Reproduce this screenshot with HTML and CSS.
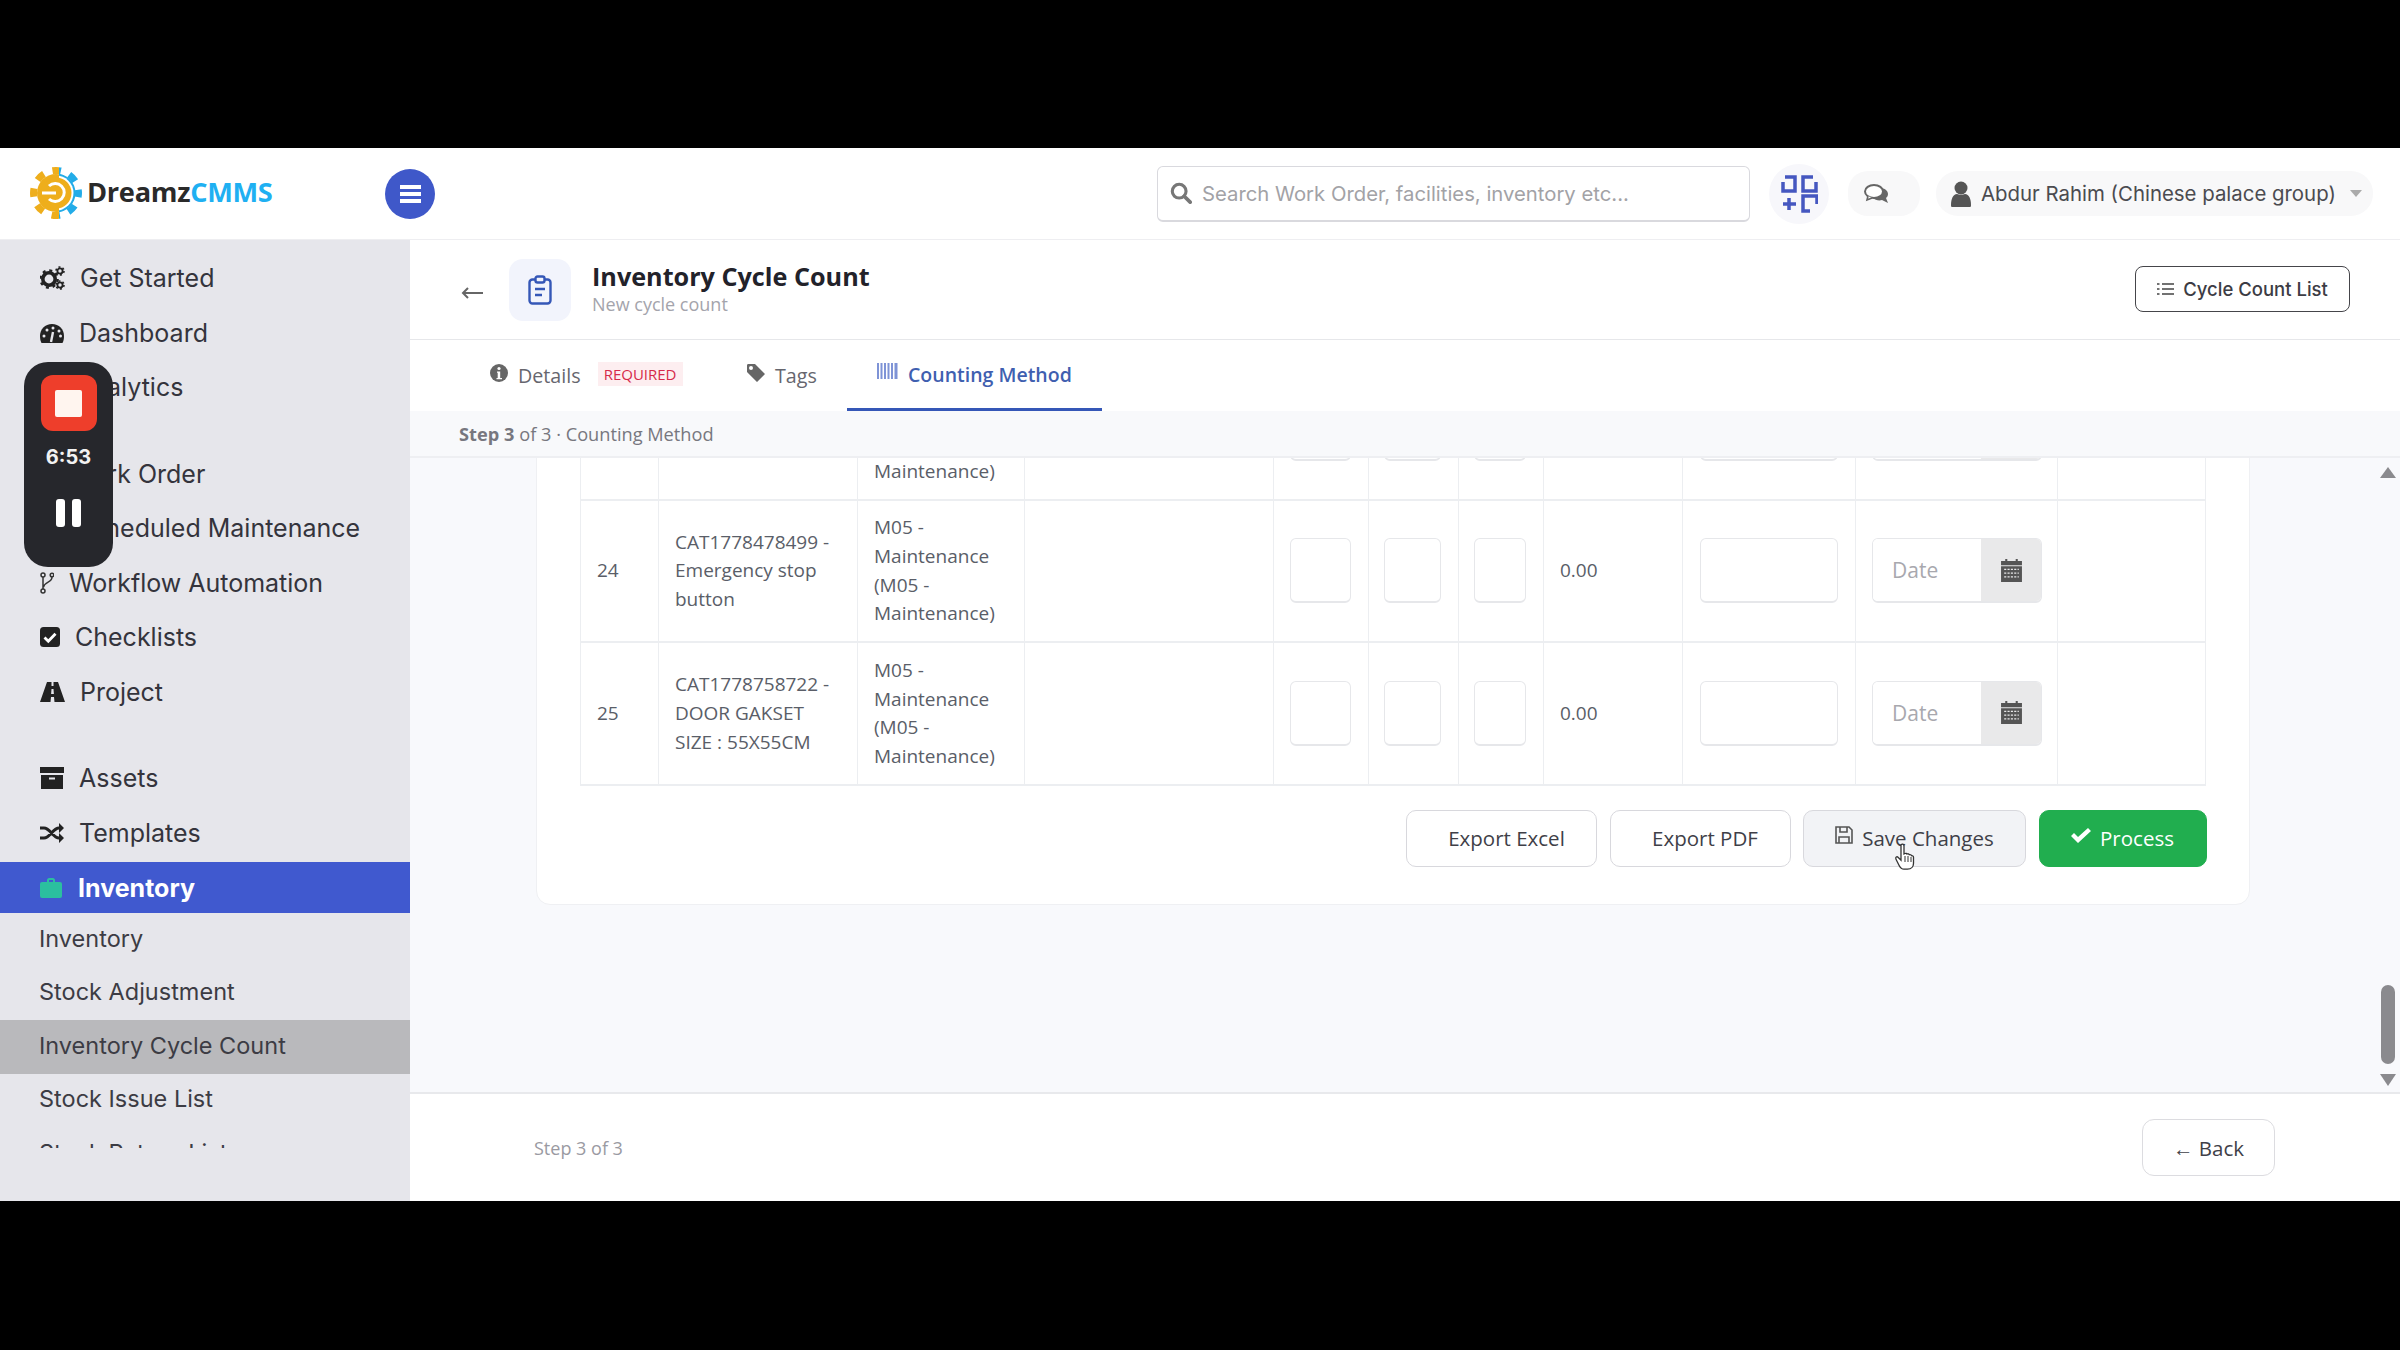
FILE: index.html
```html
<!DOCTYPE html>
<html lang="en">
<head>
  <meta charset="UTF-8">
  <title>Inventory Cycle Count - DreamzCMMS</title>
  <link rel="stylesheet" href="styles.css">
</head>
<body>
<div class="app">

  <!-- Top bar -->
  <header class="topbar">
    <div class="brand">
      <svg class="brand-logo" viewBox="0 0 52 52">
        <defs>
          <clipPath id="logo-left"><rect x="0" y="0" width="29" height="52"/></clipPath>
          <clipPath id="logo-right"><rect x="29" y="0" width="23" height="52"/></clipPath>
        </defs>
        <g clip-path="url(#logo-left)">
          <circle cx="26" cy="26" r="19" fill="#eeae1c"/>
          <circle cx="26" cy="26" r="22.5" fill="none" stroke="#eeae1c" stroke-width="7" stroke-dasharray="8.6 9.07" stroke-dashoffset="4.3"/>
        </g>
        <g clip-path="url(#logo-right)">
          <circle cx="26" cy="26" r="19.5" fill="#23ace8"/>
          <circle cx="26" cy="26" r="22.5" fill="none" stroke="#23ace8" stroke-width="7" stroke-dasharray="8.6 9.07" stroke-dashoffset="4.3"/>
          <circle cx="26" cy="26" r="17.5" fill="#fff"/>
        </g>
        <circle cx="26" cy="26" r="15.5" fill="#eeae1c"/>
        <path d="M19 19A9 9 0 1 1 19 32M12 26H26" fill="none" stroke="#fff" stroke-width="3"/>
      </svg>
      <span class="brand-name">Dreamz<span class="brand-accent">CMMS</span></span>
    </div>
    <button class="menu-toggle"><span></span><span></span><span></span></button>

    <div class="search-box">
      <svg class="search-icon" viewBox="0 0 24 24"><circle cx="10" cy="10" r="7.5" fill="none" stroke="#777" stroke-width="3.4"/><path d="M15.5 15.5L22 22" stroke="#777" stroke-width="4" stroke-linecap="round"/></svg>
      <input type="text" placeholder="Search Work Order, facilities, inventory etc...">
    </div>

    <div class="scan-btn">
      <svg viewBox="0 0 38 38" fill="none" stroke="#4557c0" stroke-width="3.5">
        <path d="M5 2H15V16H3V7"/>
        <path d="M33 2H23V16H36V7"/>
        <path d="M3 29H16M9 23V35"/>
        <path d="M30 36H23V21H37V29"/>
      </svg>
    </div>
    <div class="chat-btn">
      <svg viewBox="0 0 25 19">
        <path d="M12 4c7-1 12 2 12 6 0 2-1 3-2 4l2 5-6-3c-3 1-7 0-9-2z" fill="#666"/>
        <ellipse cx="10" cy="7.5" rx="9" ry="6.5" fill="#fff" stroke="#666" stroke-width="2"/>
        <path d="M4 12l-1 4 5-2" fill="#fff" stroke="#666" stroke-width="1.6"/>
      </svg>
    </div>
    <div class="user-pill">
      <svg class="user-icon" viewBox="0 0 20 26"><circle cx="10" cy="7" r="6.5" fill="#555"/><path d="M1 26c-1 0-1-1-1-2 0-6 2-11 6-11 2 1 6 1 8 0 4 0 6 5 6 11 0 1 0 2-1 2z" fill="#555"/></svg>
      <span class="user-name">Abdur Rahim (Chinese palace group)</span>
      <span class="user-caret"></span>
    </div>
  </header>

  <div class="app-body">

    <!-- Sidebar -->
    <aside class="sidebar">
      <nav class="nav-list">
        <a class="nav-item" href="#">
          <svg class="ico ico-cogs" viewBox="0 0 25 24"><circle cx="9" cy="13" r="6.2" fill="none" stroke="#222" stroke-width="3.6"/><circle cx="9" cy="13" r="8.6" fill="none" stroke="#222" stroke-width="2.4" stroke-dasharray="3 3.75"/><circle cx="20" cy="5" r="2.6" fill="none" stroke="#222" stroke-width="1.8"/><circle cx="20" cy="5" r="4" fill="none" stroke="#222" stroke-width="1.6" stroke-dasharray="2 2.2"/><circle cx="20" cy="19" r="2.6" fill="none" stroke="#222" stroke-width="1.8"/><circle cx="20" cy="19" r="4" fill="none" stroke="#222" stroke-width="1.6" stroke-dasharray="2 2.2"/></svg>
          Get Started
        </a>
        <a class="nav-item" href="#">
          <svg class="ico ico-dash" viewBox="0 0 24 20"><path d="M1.5 20C.5 18 0 16 0 13 0 6 5 1 12 1s12 5 12 12c0 3-.5 5-1.5 7z" fill="#222"/><path d="M11 19l2-10" stroke="#e6e6eb" stroke-width="2.4"/><g fill="#e6e6eb"><circle cx="4" cy="13" r="1.5"/><circle cx="7" cy="7" r="1.5"/><circle cx="13" cy="5" r="1.5"/><circle cx="19" cy="8" r="1.5"/><circle cx="20.5" cy="13" r="1.5"/></g></svg>
          Dashboard
        </a>
        <a class="nav-item" href="#">
          <svg class="ico ico-analytics" viewBox="0 0 20 20"><path d="M1 20V10h4v10zM8 20V4h4v16zM15 20V0h4v20z" fill="#222"/></svg>
          Analytics
        </a>
        <a class="nav-item nav-gap" href="#">
          <svg class="ico ico-order" viewBox="0 0 14 20"><path d="M0 0h14v20H0z" fill="#222"/></svg>
          Work Order
        </a>
        <a class="nav-item" href="#">
          <svg class="ico ico-analytics" viewBox="0 0 20 20"><path d="M0 2h20v18H0z" fill="#222"/></svg>
          Scheduled Maintenance
        </a>
        <a class="nav-item" href="#">
          <svg class="ico ico-flow" viewBox="0 0 14 22" fill="none" stroke="#333" stroke-width="1.5"><circle cx="3" cy="3" r="2"/><circle cx="12" cy="3" r="1.8"/><circle cx="3" cy="19" r="2"/><path d="M3 5v12M12 5c0 6-7 4-8.500 10"/></svg>
          Workflow Automation
        </a>
        <a class="nav-item" href="#">
          <svg class="ico ico-check" viewBox="0 0 20 20"><rect width="20" height="20" rx="3.5" fill="#222"/><path d="M4.500 10.500l3.800 3.800 7.200-7.600" fill="none" stroke="#fff" stroke-width="2.8"/></svg>
          Checklists
        </a>
        <a class="nav-item" href="#">
          <svg class="ico ico-road" viewBox="0 0 25 20"><path d="M7 0h4.500v4h2V0H18l7 20H14.500l-.5-5h-3l-.5 5H0zM11.500 7l-.4 5h2.800l-.4-5z" fill="#222"/></svg>
          Project
        </a>
        <a class="nav-item nav-gap" href="#">
          <svg class="ico ico-box" viewBox="0 0 24 22"><path d="M0 0h24v6H0zM1 8h22v14H1z" fill="#222"/><path d="M9 11.500h6" stroke="#e6e6eb" stroke-width="2"/></svg>
          Assets
        </a>
        <a class="nav-item" href="#">
          <svg class="ico ico-box" viewBox="0 0 24 20"><path d="M0 5h4c6 0 9 10 15 10h1M0 15h4c6 0 9-10 15-10h1" fill="none" stroke="#222" stroke-width="3"/><path d="M19 0l5 5-5 5zM19 10l5 5-5 5z" fill="#222"/></svg>
          Templates
        </a>
        <a class="nav-item nav-active" href="#">
          <svg class="ico ico-case" viewBox="0 0 22 20"><path d="M7 4V2c0-1 1-2 2-2h4c1 0 2 1 2 2v2h-2V2H9v2z" fill="#2bbf9f"/><rect y="4" width="22" height="16" rx="2" fill="#2bbf9f"/></svg>
          Inventory
        </a>
        <a class="nav-sub" href="#">Inventory</a>
        <a class="nav-sub" href="#">Stock Adjustment</a>
        <a class="nav-sub nav-current" href="#">Inventory Cycle Count</a>
        <a class="nav-sub" href="#">Stock Issue List</a>
        <a class="nav-sub" href="#">Stock Return List</a>
      </nav>
    </aside>

    <!-- Main -->
    <main class="main">
      <div class="page-head">
        <span class="back-arrow">
          <svg viewBox="0 0 22 12" fill="none" stroke="#666" stroke-width="2"><path d="M22 6H2M7 1L2 6l5 5"/></svg>
        </span>
        <div class="page-tile">
          <svg viewBox="0 0 24 30" fill="none" stroke="#3557b7" stroke-width="2.4"><rect x="1.5" y="4.5" width="21" height="24" rx="3"/><rect x="7.5" y="1.5" width="9" height="6" rx="2" fill="#f2f4fc"/><path d="M7 14h10M7 20h7"/></svg>
        </div>
        <div class="page-titles">
          <h1>Inventory Cycle Count</h1>
          <p>New cycle count</p>
        </div>
        <a class="list-btn" href="#">
          <svg viewBox="0 0 17 14" fill="none" stroke="#444" stroke-width="1.6"><path d="M5 2h12M5 7h12M5 12h12M0 2h2.500M0 7h2.500M0 12h2.500"/></svg>
          Cycle Count List
        </a>
      </div>

      <div class="tabs">
        <a class="tab tab-details" href="#">
          <svg class="tab-icon" viewBox="0 0 18 18"><circle cx="9" cy="9" r="9" fill="#666"/><path d="M7 7.500h3.200V14H12v1.200H6.500V14h1.200V8.700H7z" fill="#fff"/><circle cx="9" cy="4.500" r="1.600" fill="#fff"/></svg>
          Details
          <span class="badge">REQUIRED</span>
        </a>
        <a class="tab tab-tags" href="#">
          <svg class="tab-icon" viewBox="0 0 18 18"><path d="M0 1.500C0 .5.500 0 1.500 0H8l10 10-8 8L0 8zM4 6a2 2 0 1 0 0-4 2 2 0 0 0 0 4z" fill="#666"/></svg>
          Tags
        </a>
        <a class="tab tab-current" href="#">
          <svg class="tab-icon tab-icon-wide" viewBox="0 0 21 16"><path d="M0 0h2v16H0zM3.500 0h2v16h-2zM7 0h2v16H7zM10.500 0h2v16h-2zM14 0h2v16h-2zM17.500 0h3v16h-3z" fill="#7e93d6"/></svg>
          Counting Method
        </a>
      </div>

      <div class="step-bar"><strong>Step 3</strong> of 3 &middot; Counting Method</div>

      <div class="scroll-area">
        <div class="card">
          <table class="count-table">
            <colgroup>
              <col class="c-no"><col class="c-item"><col class="c-cat"><col class="c-note">
              <col class="c-a"><col class="c-b"><col class="c-c"><col class="c-total">
              <col class="c-amount"><col class="c-date"><col class="c-end">
            </colgroup>
            <tbody id="rows"></tbody>
          </table>

          <div class="actions">
            <button class="btn btn-excel">Export Excel</button>
            <button class="btn btn-pdf">Export PDF</button>
            <button class="btn btn-save">
              <svg viewBox="0 0 18 18" fill="none" stroke="#555" stroke-width="1.6"><path d="M1 1h13l3 3v13H1z"/><path d="M5 1v5h7V1M4 17v-6h10v6"/></svg>
              Save Changes
            </button>
            <button class="btn btn-process">
              <svg viewBox="0 0 20 15"><path d="M0 8l3-3 4 4 10-9 3 3L7 15z" fill="#fff"/></svg>
              Process
            </button>
          </div>
        </div>

        <!-- custom scrollbar -->
        <span class="scroll-up"></span>
        <span class="scroll-thumb"></span>
        <span class="scroll-down"></span>
      </div>

      <div class="page-foot">
        <span class="foot-step">Step 3 of 3</span>
        <a class="back-btn" href="#">&larr; Back</a>
      </div>
    </main>
  </div>

  <!-- Screen recorder widget -->
  <div class="recorder">
    <div class="rec-stop"><span></span></div>
    <div class="rec-time">6:53</div>
    <div class="rec-pause"><span></span><span></span></div>
  </div>

  <!-- Mouse pointer -->
  <svg class="pointer" viewBox="0 0 20 28"><path d="M6 2c1-1.500 3-1 3 1v8l1-.5c1-.5 2 0 2 .5 1-.5 2 0 2.300.7 1-.4 2 .2 2.200 1 1-.2 2 .5 2 1.500v6c0 3-2 6-6 6H9c-3 0-4-2-5-4l-3-6c-1-2 1-3 2-2l3 3z" fill="#fff" stroke="#333" stroke-width="1.300"/><path d="M10 13v6M13 13v6M16 14v5" stroke="#333" stroke-width="1"/></svg>
</div>

<script>
  // rows of the list, the first one is scrolled mostly out of view
  const cat = 'M05 -<br>Maintenance<br>(M05 -<br>Maintenance)';
  const items = [
    { no: '', name: '' },
    { no: 24, name: 'CAT1778478499 -<br>Emergency stop<br>button' },
    { no: 25, name: 'CAT1778758722 -<br>DOOR GAKSET<br>SIZE : 55X55CM' }
  ];
  const calendar = '<svg viewBox="0 0 20 22"><path d="M4 0h2v3H4zM14 0h2v3h-2zM0 2h20v4H0z" fill="#555"/><path d="M0 7h20v15H0z" fill="#555"/><path d="M3 10h14M3 13.500h14M3 17h14" stroke="#e9e9ea" stroke-width="1.200" stroke-dasharray="2 1.200"/></svg>';

  document.getElementById('rows').innerHTML = items.map(item => `
    <tr>
      <td class="cell-no">${item.no}</td>
      <td>${item.name}</td>
      <td>${cat}</td>
      <td></td>
      <td class="cell-input"><input class="qty qty-a" type="text"></td>
      <td class="cell-input"><input class="qty qty-b" type="text"></td>
      <td class="cell-input"><input class="qty qty-c" type="text"></td>
      <td class="cell-total">0.00</td>
      <td class="cell-input"><input class="qty qty-d" type="text"></td>
      <td class="cell-input">
        <div class="date-group"><input type="text" placeholder="Date"><span class="date-addon">${calendar}</span></div>
      </td>
      <td></td>
    </tr>`).join('');
</script>
</body>
</html>
```

FILE: styles.css
```css
/* General */
* {
  box-sizing: border-box;
}

html, body {
  margin: 0;
  height: 1350px;
  overflow: hidden;
  background-color: #000;
}

body {
  padding-top: 148px;
  font-family: Inter, "Liberation Sans", sans-serif;
  color: #333;
}

a {
  text-decoration: none;
  color: inherit;
}

.app {
  position: relative;
  height: 1053px;
  display: flex;
  flex-direction: column;
  background-color: #fff;
}

/* Top bar */
.topbar {
  height: 92px;
  display: flex;
  align-items: center;
  background-color: #fff;
  border-bottom: 1px solid #eeeef1;
}

.brand {
  width: 385px;
  padding-left: 30px;
  display: flex;
  align-items: center;
  gap: 5px;
}

.brand-logo {
  width: 52px;
  height: 52px;
  margin-top: -2px;
}

.brand-name {
  margin-top: -4px;
  font-family: "Open Sans", sans-serif;
  font-size: 27.2px;
  font-weight: 700;
  color: #2a2a2a;
  letter-spacing: -0.3px;
}

.brand-accent {
  color: #1fb0f2;
}

.menu-toggle {
  width: 50px;
  height: 50px;
  border: none;
  border-radius: 50%;
  background-color: #3f58c9;
  display: flex;
  flex-direction: column;
  justify-content: center;
  align-items: center;
  gap: 3px;
  padding: 0;
}

.menu-toggle span {
  width: 21px;
  height: 4px;
  background-color: #fff;
}

.search-box {
  margin-left: 722px;
  width: 593px;
  height: 56px;
  display: flex;
  align-items: center;
  gap: 10px;
  padding-left: 12px;
  border: 1px solid #d9d9de;
  border-bottom-width: 2px;
  border-radius: 6px;
}

.search-icon {
  width: 22px;
  height: 22px;
  flex: none;
}

.search-box input {
  flex: 1;
  border: none;
  outline: none;
  padding: 0;
  font-family: Inter, sans-serif;
  font-size: 20.3px;
}

.search-box input::placeholder {
  color: #a2a2a6;
}

.scan-btn {
  margin-left: 19px;
  width: 60px;
  height: 60px;
  display: flex;
  align-items: center;
  justify-content: center;
  background-color: #f7f7fb;
  border-radius: 50%;
}

.scan-btn svg {
  width: 38px;
  height: 38px;
}

.chat-btn {
  margin-left: 19px;
  width: 72px;
  height: 45px;
  display: flex;
  align-items: center;
  justify-content: center;
  padding-right: 16px;
  background-color: #f8f8f9;
  border-radius: 20px;
}

.chat-btn svg {
  width: 25px;
  height: 19px;
}

.user-pill {
  margin-left: 16px;
  width: 437px;
  height: 45px;
  display: flex;
  align-items: center;
  padding-left: 15px;
  background-color: #f8f8f9;
  border-radius: 22px;
}

.user-icon {
  width: 20px;
  height: 26px;
  flex: none;
}

.user-name {
  margin-left: 10px;
  font-size: 20.4px;
  color: #4b4b50;
  white-space: nowrap;
}

.user-caret {
  margin-left: 14px;
  border-left: 6px solid transparent;
  border-right: 6px solid transparent;
  border-top: 7px solid #aaa;
}

.app-body {
  flex: 1;
  min-height: 0;
  display: grid;
  grid-template-columns: 410px 1fr;
}

/* Sidebar */
.sidebar {
  background-color: #e6e6eb;
}

.nav-list {
  height: 908px;
  padding-top: 11px;
  overflow: hidden;
}

.nav-item {
  height: 54.5px;
  display: flex;
  align-items: center;
  gap: 15px;
  padding-left: 40px;
  font-size: 25px;
  color: #34343c;
}

.nav-gap {
  margin-top: 32px;
}

.nav-active {
  height: 51px;
  background-color: #4059cf;
  color: #fff;
  font-weight: 700;
  margin-top: 2px;
  gap: 16px;
}

.nav-sub {
  display: flex;
  align-items: center;
  height: 53.5px;
  padding-left: 39px;
  padding-bottom: 3px;
  font-size: 23.5px;
  color: #3c3c44;
  white-space: nowrap;
}

.nav-current {
  background-color: #b9b9bc;
}

.ico {
  flex: none;
}

.ico-cogs { width: 25px; height: 24px; }
.ico-dash { width: 24px; height: 20px; }
.ico-analytics { width: 20px; height: 20px; }
.ico-order { width: 14px; height: 20px; }
.ico-flow { width: 14px; height: 22px; }
.ico-check { width: 20px; height: 20px; }
.ico-road { width: 25px; height: 20px; }
.ico-box { width: 24px; height: 22px; }
.ico-case { width: 22px; height: 20px; }

/* Main */
.main {
  min-width: 0;
  display: flex;
  flex-direction: column;
}

.page-head {
  height: 100px;
  display: flex;
  align-items: center;
  padding-left: 51px;
  padding-right: 50px;
  border-bottom: 1px solid #e6e7ea;
}

.back-arrow {
  width: 48px;
  padding-top: 6px;
}

.back-arrow svg {
  display: block;
  width: 22px;
  height: 12px;
}

.page-tile {
  width: 62px;
  height: 62px;
  flex: none;
  display: flex;
  align-items: center;
  justify-content: center;
  background-color: #f2f4fc;
  border-radius: 14px;
}

.page-tile svg {
  width: 24px;
  height: 30px;
}

.page-titles {
  margin-left: 21px;
  margin-top: -4px;
  font-family: "Open Sans", sans-serif;
  flex: 1;
}

.page-titles h1 {
  margin: 0;
  font-size: 25.2px;
  line-height: 32px;
  font-weight: 700;
  color: #22222a;
}

.page-titles p {
  margin: 0;
  font-size: 18px;
  line-height: 24px;
  color: #a4a4ac;
}

.list-btn {
  width: 215px;
  height: 46px;
  margin-top: -2px;
  display: flex;
  align-items: center;
  justify-content: center;
  gap: 9px;
  border: 1.5px solid #45454a;
  border-radius: 8px;
  font-size: 18.5px;
  font-weight: 500;
  color: #3c3c44;
}

.list-btn svg {
  width: 17px;
  height: 14px;
}

/* Tabs */
.tabs {
  height: 71px;
  display: flex;
  padding-left: 80px;
  font-family: "Open Sans", sans-serif;
  font-size: 19.7px;
  background-color: #fff;
}

.tab {
  display: flex;
  align-items: center;
  gap: 10px;
  color: #66666e;
  height: 71px;
}

.tab-details {
  width: 257px;
}

.tab-tags {
  width: 100px;
}

.tab-current {
  width: 255px;
  padding-left: 30px;
  font-size: 19.5px;
  color: #3f5fb0;
  font-weight: 600;
  border-bottom: 3px solid #3557b7;
}

.tab-icon {
  width: 18px;
  height: 18px;
  margin-top: -6px;
}

.tab-icon-wide {
  width: 21px;
  height: 16px;
}

.badge {
  margin-left: 7px;
  margin-top: -4px;
  padding: 2px 6px;
  background-color: #fdeef0;
  color: #d6294a;
  font-size: 15px;
  line-height: 20px;
}

.step-bar {
  height: 47px;
  display: flex;
  align-items: center;
  gap: 5px;
  padding-left: 49px;
  background-color: #f8f9fb;
  border-bottom: 2px solid #eeeff2;
  font-family: "Open Sans", sans-serif;
  font-size: 18.2px;
  color: #77777f;
}

/* Scrolling content */
.scroll-area {
  position: relative;
  flex: 1;
  min-height: 0;
  overflow: hidden;
  padding: 0 150px 0 126px;
  background-color: #f8f9fc;
}

.card {
  margin-top: -141px;
  padding: 38px 45px 37px 43px;
  background-color: #fff;
  border: 1px solid #eff0f3;
  border-radius: 14px;
}

.count-table {
  width: 1625px;
  table-layout: fixed;
  border-collapse: collapse;
  font-family: "Open Sans", sans-serif;
  font-size: 19px;
  line-height: 28.7px;
  color: #5a5e68;
}

.count-table tr {
  height: 142.5px;
}

.count-table td {
  padding: 0 16px;
  border: 1px solid #eceef1;
  border-top: 2px solid #eceef1;
  border-bottom: 2px solid #eceef1;
  vertical-align: middle;
}

.c-no { width: 78px; }
.c-item { width: 199px; }
.c-cat { width: 167px; }
.c-note { width: 249px; }
.c-a { width: 95px; }
.c-b { width: 90px; }
.c-c { width: 85px; }
.c-total { width: 139px; }
.c-amount { width: 173px; }
.c-date { width: 202px; }
.c-end { width: 148px; }

.count-table .cell-input {
  padding: 0;
}

.qty {
  display: block;
  height: 65px;
  border: 1px solid #e6e7ea;
  border-bottom-width: 2px;
  border-radius: 6px;
  background-color: #fff;
}

.qty-a { width: 61px; margin-left: 16px; }
.qty-b { width: 57px; margin-left: 15px; }
.qty-c { width: 52px; margin-left: 15px; }
.qty-d { width: 138px; margin-left: 17px; }

.date-group {
  width: 170px;
  height: 65px;
  margin-left: 16px;
  display: flex;
  border: 1px solid #e6e7ea;
  border-bottom-width: 2px;
  border-radius: 6px;
  overflow: hidden;
}

.date-group input {
  width: 108px;
  border: none;
  outline: none;
  padding-left: 19px;
  font-family: "Open Sans", sans-serif;
  font-size: 21px;
}

.date-group input::placeholder {
  color: #a8a8ae;
}

.date-addon {
  flex: 1;
  display: flex;
  align-items: center;
  justify-content: center;
  background-color: #e9e9ea;
}

.date-addon svg {
  width: 21px;
  height: 23px;
}

.actions {
  margin-top: 24px;
  display: flex;
  justify-content: flex-end;
  gap: 12.5px;
  width: 1626.5px;
}

.btn {
  height: 57px;
  display: flex;
  align-items: center;
  justify-content: center;
  gap: 9px;
  padding: 0;
  font-family: "Open Sans", sans-serif;
  font-size: 20.5px;
  font-weight: 500;
  color: #3f3f48;
  background-color: #fff;
  border: 1px solid #d8d8dd;
  border-radius: 10px;
}

.btn svg {
  width: 18px;
  height: 18px;
  margin-top: -6px;
}

.btn-excel {
  width: 191px;
  padding-left: 10px;
}

.btn-pdf {
  width: 181px;
  padding-left: 10px;
}

.btn-save {
  width: 223px;
  background-color: #f2f3f6;
}

.btn-process {
  width: 168px;
  color: #fff;
  background-color: #21ae4f;
  border-color: #21ae4f;
}

.btn-process svg {
  width: 20px;
  height: 15px;
}

/* Scrollbar over the content */
.scroll-up, .scroll-down {
  position: absolute;
  right: 4px;
  border-left: 8px solid transparent;
  border-right: 8px solid transparent;
}

.scroll-up {
  top: 9px;
  border-bottom: 11px solid #8a8a8e;
}

.scroll-down {
  bottom: 6px;
  border-top: 12px solid #8a8a8e;
}

.scroll-thumb {
  position: absolute;
  top: 527px;
  right: 5px;
  width: 14px;
  height: 79px;
  border-radius: 7px;
  background-color: #8a8a8e;
}

/* Footer */
.page-foot {
  height: 109px;
  display: flex;
  align-items: center;
  justify-content: space-between;
  padding-left: 124px;
  padding-right: 125px;
  background-color: #fff;
  border-top: 2px solid #e8e9ec;
  font-family: "Open Sans", sans-serif;
}

.foot-step {
  font-size: 18px;
  color: #9a9aa2;
}

.back-btn {
  width: 133px;
  height: 57px;
  display: flex;
  align-items: center;
  justify-content: center;
  border: 1px solid #dcdce0;
  border-radius: 12px;
  font-size: 20.5px;
  font-weight: 500;
  color: #3f3f48;
}

/* Recorder widget */
.recorder {
  position: absolute;
  left: 24px;
  top: 214px;
  width: 89px;
  height: 205px;
  padding-top: 13px;
  display: flex;
  flex-direction: column;
  align-items: center;
  background-color: #26272c;
  border-radius: 24px;
}

.rec-stop {
  width: 56px;
  height: 56px;
  display: flex;
  align-items: center;
  justify-content: center;
  background-color: #ee3e2b;
  border-radius: 12px;
}

.rec-stop span {
  width: 27px;
  height: 27px;
  background-color: #fff5ef;
  border-radius: 2px;
}

.rec-time {
  margin-top: 14px;
  font-size: 20px;
  line-height: 24px;
  font-weight: 700;
  color: #f2f2f2;
}

.rec-pause {
  margin-top: 30px;
  display: flex;
  gap: 7px;
}

.rec-pause span {
  width: 9px;
  height: 28px;
  background-color: #fff;
  border-radius: 3px;
}

.pointer {
  position: absolute;
  left: 1894px;
  top: 695px;
  width: 22px;
  height: 28px;
}
```
